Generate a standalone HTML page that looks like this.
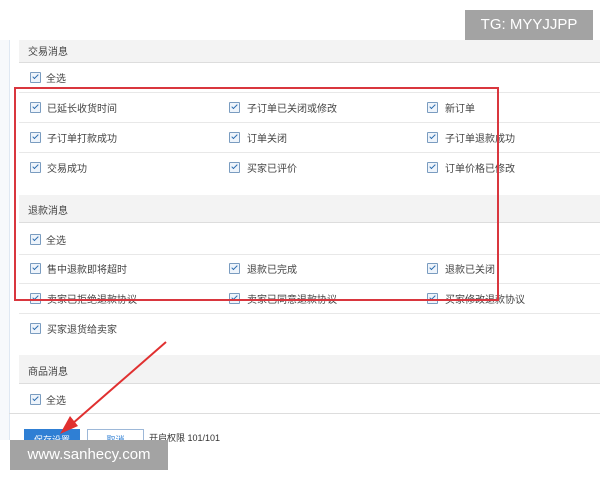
<!DOCTYPE html>
<html><head><meta charset="utf-8"><style>
body{margin:0;width:600px;height:480px;background:#fff;position:relative;overflow:hidden;font-family:"Liberation Sans","Noto Sans CJK SC",sans-serif;font-size:9px;color:#333}
.a{position:absolute}
.hd{position:absolute;left:19px;width:581px;background:#f3f3f3;border-bottom:1px solid #ddd;font-size:10px;color:#444}
.hd span{position:absolute;left:9px}
.ln{position:absolute;left:19px;width:581px;height:1px;background:#e8e8e8}
.cb{position:absolute;width:9px;height:9px;border:1px solid #7a9cc0;background:#eef4fb;border-radius:1px}
.cb:after{content:"";position:absolute;left:3px;top:0px;width:2px;height:5px;border:solid #2d6db0;border-width:0 1.5px 1.5px 0;transform:rotate(45deg)}
.t{position:absolute;font-size:10px;color:#444}
</style></head><body>
<div class="a" style="left:0;top:40px;width:9px;height:400px;background:#f7f9fc"></div>
<div class="a" style="left:9px;top:40px;width:1px;height:400px;background:#dfe8f3"></div>
<div class="hd" style="top:40px;height:22px"><span style="top:3px">交易消息</span></div>
<div class="hd" style="top:195px;height:27px"><span style="top:7px">退款消息</span></div>
<div class="hd" style="top:355px;height:28px"><span style="top:8px">商品消息</span></div>
<div class="ln" style="top:92px"></div><div class="ln" style="top:122px"></div><div class="ln" style="top:152px"></div>
<div class="ln" style="top:254px"></div><div class="ln" style="top:283px"></div><div class="ln" style="top:313px"></div>
<div class="a" style="left:9px;top:413px;width:591px;height:1px;background:#ddd"></div>

<div class="cb" style="left:30px;top:72px"></div><div class="t" style="left:46px;top:70px">全选</div>
<div class="cb" style="left:30px;top:102px"></div><div class="t" style="left:47px;top:100px">已延长收货时间</div>
<div class="cb" style="left:229px;top:102px"></div><div class="t" style="left:247px;top:100px">子订单已关闭或修改</div>
<div class="cb" style="left:427px;top:102px"></div><div class="t" style="left:445px;top:100px">新订单</div>
<div class="cb" style="left:30px;top:132px"></div><div class="t" style="left:47px;top:130px">子订单打款成功</div>
<div class="cb" style="left:229px;top:132px"></div><div class="t" style="left:247px;top:130px">订单关闭</div>
<div class="cb" style="left:427px;top:132px"></div><div class="t" style="left:445px;top:130px">子订单退款成功</div>
<div class="cb" style="left:30px;top:162px"></div><div class="t" style="left:47px;top:160px">交易成功</div>
<div class="cb" style="left:229px;top:162px"></div><div class="t" style="left:247px;top:160px">买家已评价</div>
<div class="cb" style="left:427px;top:162px"></div><div class="t" style="left:445px;top:160px">订单价格已修改</div>
<div class="cb" style="left:30px;top:234px"></div><div class="t" style="left:46px;top:232px">全选</div>
<div class="cb" style="left:30px;top:263px"></div><div class="t" style="left:47px;top:261px">售中退款即将超时</div>
<div class="cb" style="left:229px;top:263px"></div><div class="t" style="left:247px;top:261px">退款已完成</div>
<div class="cb" style="left:427px;top:263px"></div><div class="t" style="left:445px;top:261px">退款已关闭</div>
<div class="cb" style="left:30px;top:293px"></div><div class="t" style="left:47px;top:291px">卖家已拒绝退款协议</div>
<div class="cb" style="left:229px;top:293px"></div><div class="t" style="left:247px;top:291px">卖家已同意退款协议</div>
<div class="cb" style="left:427px;top:293px"></div><div class="t" style="left:445px;top:291px">买家修改退款协议</div>
<div class="cb" style="left:30px;top:323px"></div><div class="t" style="left:47px;top:321px">买家退货给卖家</div>
<div class="cb" style="left:30px;top:394px"></div><div class="t" style="left:46px;top:392px">全选</div>

<div class="a" style="left:14px;top:87px;width:485px;height:214px;border:2px solid #d9363e;box-sizing:border-box"></div>

<div class="a" style="left:24px;top:429px;width:56px;height:22px;background:#2f7fd4;color:#fff;text-align:center;line-height:22px;font-size:9px">保存设置</div>
<div class="a" style="left:87px;top:429px;width:55px;height:20px;border:1px solid #9db8d8;color:#2f7fd4;text-align:center;line-height:20px;font-size:9px">取消</div>
<div class="a" style="left:149px;top:431px;font-size:9px;color:#333">开启权限 101/101</div>

<svg class="a" style="left:0;top:0" width="600" height="480"><line x1="166" y1="342" x2="72" y2="424" stroke="#e03030" stroke-width="2"/><polygon points="60,434 70,416 78,426" fill="#e03030"/></svg>

<div class="a" style="left:465px;top:10px;width:128px;height:30px;background:#a3a3a3;color:#fff;font-size:15px;line-height:30px;text-align:center">TG: MYYJJPP</div>
<div class="a" style="left:10px;top:440px;width:158px;height:30px;background:#a3a3a3;color:#fff;font-size:15px;line-height:30px;text-align:center">www.sanhecy.com</div>
</body></html>
